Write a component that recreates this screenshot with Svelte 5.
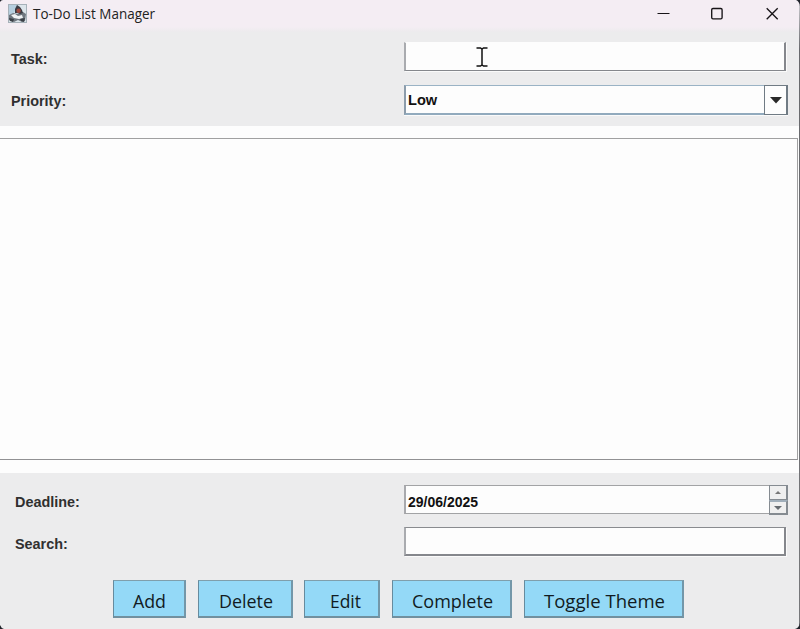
<script>
  let priority = $state('Low');
  let deadline = $state('29/06/2025');
  const actions = [
    { label: 'Add', width: 73, shift: 0, gap: 12, text: 33 },
    { label: 'Delete', width: 95, shift: 0, gap: 11, text: 54 },
    { label: 'Edit', width: 76, shift: 3, gap: 12, text: 31 },
    { label: 'Complete', width: 120, shift: 0, gap: 12, text: 81 },
    { label: 'Toggle Theme', width: 160, shift: 0, gap: 0, text: 121 }
  ];
</script>

<main class="window">
  <header>
    <svg class="logo" width="20" height="20" viewBox="0 0 20 20">
      <rect x=".5" y=".5" width="18" height="18" fill="#dce5eb" stroke="#a6b1b9" />
      <path d="M1 1H10L6 9L1 11Z" fill="#b5cede" />
      <path d="M1 11L5 9L10 10L15 8L18 10L17 17L14 18L10 16L6 18L1 16Z" fill="#70777f" />
      <path d="M3 11L7 10L10 12L14 11L15 14L11 15L6 14Z" fill="#f1f3f5" />
      <path d="M9 1L12 3L14 6L15 9L12 10L9 9L7 9L7 5Z" fill="#3a3c44" />
      <circle cx="10.6" cy="6.8" r="2.2" fill="#9d493f" />
      <path d="M1 14L6 15L5 18L2 17ZM12 15L17 14L16 18L13 17Z" fill="#3b4047" />
    </svg>
    <h1>
      <svg width="124" height="22"><text x="0" y="15" textLength="122" lengthAdjust="spacingAndGlyphs">To-Do List Manager</text></svg>
    </h1>
    <svg class="controls" width="130" height="28" viewBox="0 0 130 28" fill="none" stroke="#171417" stroke-width="1.35">
      <path d="M7.5 13.5H19.5" stroke-width="1" />
      <rect x="61.7" y="8.5" width="10.4" height="10.4" rx="1.3" />
      <path d="M116.7 8.2L127.7 19.2M127.7 8.2L116.7 19.2" />
    </svg>
  </header>

  <section class="top">
    <div class="row task">
      <label for="task">Task:</label>
      <div class="field open"><input id="task" /></div>
    </div>
    <div class="row priority">
      <label for="priority">Priority:</label>
      <div class="combo">
        <input id="priority" bind:value={priority} readonly />
        <button aria-label="Choose priority">
          <svg width="12" height="7" viewBox="0 0 12 7"><path d="M0 0H12L6 6.5Z" fill="#292929" /></svg>
        </button>
      </div>
    </div>
  </section>

  <div class="list"></div>

  <section class="bottom">
    <div class="row">
      <label for="deadline">Deadline:</label>
      <div class="date">
        <input id="deadline" bind:value={deadline} />
        <div class="spinner">
          <button aria-label="Later"><svg width="6" height="3" viewBox="0 0 6 3"><path d="M0 3L3 0L6 3Z" fill="#777" /></svg></button>
          <button aria-label="Earlier"><svg width="8" height="4" viewBox="0 0 8 4"><path d="M0 0H8L4 4Z" fill="#666b70" /></svg></button>
        </div>
      </div>
    </div>
    <div class="row search">
      <label for="search">Search:</label>
      <div class="field"><input id="search" /></div>
    </div>
    <div class="actions">
      {#each actions as action}
        <button style="width:{action.width}px;margin-right:{action.gap}px">
          <svg width={action.text} height="30" style="margin-left:{action.shift * 2 + 1}px">
            <text x="0" y="24" textLength={action.text} lengthAdjust="spacingAndGlyphs">{action.label}</text>
          </svg>
        </button>
      {/each}
    </div>
  </section>

  <i class="edge"></i>
  <svg class="corners" width="800" height="629" viewBox="0 0 800 629">
    <path d="M0 0H3Q1 0 0 2ZM796 0H800V6Q799 1 796 0ZM0 625Q1 628 4 629H0ZM800 623V629H795Q799 628 800 623Z" fill="#20232b" />
  </svg>
  <svg class="cursor" width="12" height="20" viewBox="0 0 12 20">
    <path d="M.5 1H4.5L6 2L7.5 1H11.5M6 2V18M.5 19H4.5L6 18L7.5 19H11.5" fill="none" stroke="#111" stroke-width="1.5" />
  </svg>
</main>

<style>
  :global(body) { margin: 0; overflow: hidden; }
  * { box-sizing: border-box; }
  .window {
    position: relative; width: 800px; height: 629px; overflow: hidden;
    display: flex; flex-direction: column; background: #fdfdfd;
    font-family: "Liberation Sans", sans-serif;
  }
  header {
    height: 32px; flex: none; display: flex; align-items: flex-start;
    padding: 4px 20px 0 8px; background: linear-gradient(#f4edf3 27px, #ecebed);
  }
  .logo { flex: none; }
  h1 { flex: 1; height: 22px; margin: 0 0 0 5px; font-size: 14px; line-height: 0; }
  h1 svg { overflow: visible; }
  h1 text { font: 400 14px "Open Sans", "Noto Sans", sans-serif; fill: #222; }
  .controls { flex: none; margin-top: -4px; }
  .top { height: 94px; flex: none; background: #ececed; padding: 10px 12px 0 11px; }
  .bottom { height: 156px; flex: none; background: #ececed; padding: 12px 12px 0 15px; }
  .row { display: flex; justify-content: space-between; height: 30px; }
  label { font-weight: bold; font-size: 14.4px; line-height: 34px; color: #303030; }
  .priority { margin-top: 13px; }
  .priority label { line-height: 32px; }
  input {
    display: block; flex: 1; width: 100%; min-width: 0; height: 100%;
    padding: 0 0 0 2px; border: 0; outline: 0; background: transparent;
    font: bold 14.6px "Liberation Sans", sans-serif; color: #111;
  }
  .field {
    width: 382px; height: 29px; margin-right: 2px; background: #fdfdfd;
    border: 1px solid #898b8f; border-left: 2px solid #a9abaf;
    border-right: 2px solid #85878c; border-bottom-color: #85878c;
    box-shadow: 1px 1px #fafafa;
  }
  .open { border-top-color: #fdfdfd; }
  .search .field { border-bottom-width: 2px; }
  .combo {
    width: 384px; height: 30px; display: flex; background: #fdfdfd;
    border: 1px solid #9ab3c5; border-left: 2px solid #8c9cab;
    border-bottom: 2px solid #91aabd; box-shadow: 0 1px #fafafa;
  }
  button { margin: 0; padding: 0; border: 0; display: flex; align-items: center; justify-content: center; }
  .combo button {
    width: 24px; height: 30px; margin: -1px -1px 0 0; background: #fdfdfd;
    border: 1px solid #707b84; border-right-width: 2px;
  }
  .combo svg { margin-left: 1px; }
  .list { height: 322px; flex: none; margin: 12px 2px 13px 0; border: 1px solid #a0a0a1; border-left: 0; border-bottom-color: #919193; }
  .date { width: 384px; height: 30px; display: flex; }
  .date > input {
    height: 29px; border: 1px solid #a2a3a5; border-left: 2px solid #a8a9ad;
    border-right: 0; background: #fdfdfd; font-size: 14px; padding: 4px 0 0 2px;
  }
  .spinner { width: 19px; height: 30px; display: flex; flex-direction: column; }
  .spinner button { height: 15px; background: #efefef; border: 1px solid #858b91; border-right-width: 2px; }
  .spinner button:last-child { border-top: 2px solid #a0aeba; border-bottom-width: 2px; }
  .search { margin-top: 12px; }
  .actions { display: flex; margin: 23px 0 0 98px; }
  .actions button {
    flex: none; height: 38px; background: #94d9f7;
    border: 1px solid #7f9fac; border-left-color: #668b9e;
    border-right: 2px solid #7397a9; border-bottom: 2px solid #71909f;
  }
  .actions svg { overflow: visible; }
  .actions text { font: 400 18.5px "Open Sans", "Noto Sans", sans-serif; fill: #111b22; }
  .edge { position: absolute; right: 0; top: 5px; bottom: 4px; width: 1px; background: linear-gradient(#c5c5c9, #68696d 45px, #77787b); }
  .corners { position: absolute; inset: 0; pointer-events: none; }
  .cursor { position: absolute; left: 476px; top: 47px; pointer-events: none; }
</style>
